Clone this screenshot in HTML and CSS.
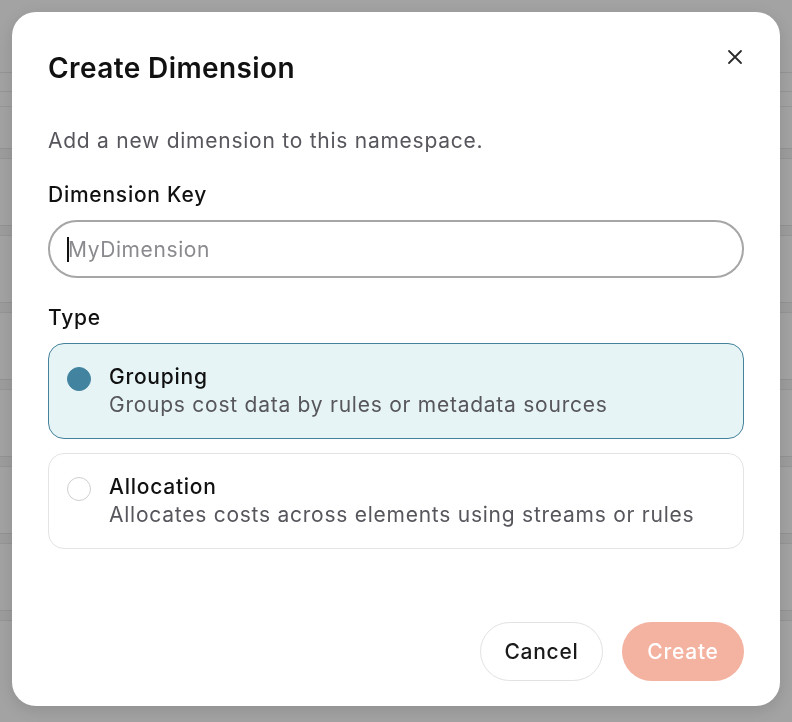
FILE: index.html
```html
<!DOCTYPE html>
<html lang="en">

<head>
    <meta charset="UTF-8">
    <meta name="viewport" content="width=device-width, initial-scale=1.0">
    <title>Create Dimension</title>
    <link rel="stylesheet" href="styles.css">
</head>

<body>

    <!-- page behind the dialog -->
    <div class="page">
        <div class="table-head"></div>
        <div class="table-sub"></div>
        <div class="rows">
            <div class="row"><div class="band"></div></div>
            <div class="row"><div class="band"></div></div>
            <div class="row"><div class="band"></div></div>
            <div class="row"><div class="band"></div></div>
            <div class="row"><div class="band"></div></div>
            <div class="row"><div class="band"></div></div>
            <div class="row"><div class="band"></div></div>
        </div>
    </div>

    <div class="overlay">
        <div class="modal">
            <div class="modal-header">
                <h2>Create Dimension</h2>
                <button class="close" aria-label="Close">
                    <svg width="16" height="16" viewBox="0 0 16 16">
                        <path d="M2 2 L14 14 M14 2 L2 14" stroke="#2b2b2b" stroke-width="1.8" stroke-linecap="round" />
                    </svg>
                </button>
            </div>

            <p class="subtitle">Add a new dimension to this namespace.</p>

            <label for="key">Dimension Key</label>
            <div class="field">
                <input type="text" id="key" placeholder="MyDimension">
                <span class="caret"></span>
            </div>

            <label>Type</label>
            <div class="options">
                <div class="option selected">
                    <span class="radio"></span>
                    <div>
                        <div class="option-title">Grouping</div>
                        <div class="option-desc">Groups cost data by rules or metadata sources</div>
                    </div>
                </div>
                <div class="option">
                    <span class="radio"></span>
                    <div>
                        <div class="option-title">Allocation</div>
                        <div class="option-desc">Allocates costs across elements using streams or rules</div>
                    </div>
                </div>
            </div>

            <div class="actions">
                <button class="btn btn-cancel">Cancel</button>
                <button class="btn btn-create">Create</button>
            </div>
        </div>
    </div>

</body>

</html>
```

FILE: styles.css
```css
body {
    font-family: 'Inter', 'Open Sans', sans-serif;
    background-color: #a3a3a3;
    margin: 0;
    padding: 0;
    letter-spacing: 0.75px;
}

/* Faded table under the overlay */
.page {
    padding-top: 72px;
}

.table-head {
    height: 18px;
    border-top: 1px solid #959595;
    border-bottom: 1px solid #969696;
}

.table-sub {
    height: 14px;
    border-bottom: 1px solid #979797;
}

.rows {
    margin-top: 41px;
}

.row {
    height: 77px;
}

.band {
    height: 9px;
    background-color: #9d9d9d;
    border-top: 1px solid #939393;
    border-bottom: 1px solid #959595;
}

.overlay {
    position: fixed;
    inset: 0;
    padding: 12px;
}

.modal {
    background-color: white;
    border-radius: 24px;
    height: 694px;
    box-sizing: border-box;
    padding: 40px 36px 25px;
    display: flex;
    flex-direction: column;
    box-shadow: 0px 4px 16px rgba(0, 0, 0, 0.12);
}

.modal-header {
    display: flex;
    justify-content: space-between;
    align-items: flex-start;
}

h2 {
    margin: 0;
    font-size: 28px;
    line-height: 32px;
    font-weight: 600;
    letter-spacing: 0.4px;
    color: #111;
}

.close {
    background: none;
    border: none;
    padding: 0;
    margin-top: -3px;
    margin-right: 1px;
    width: 16px;
    height: 16px;
    cursor: pointer;
}

.subtitle {
    margin: 43px 0 26px;
    font-size: 21px;
    line-height: 28px;
    color: #56565c;
}

label {
    display: block;
    font-size: 21px;
    line-height: 28px;
    font-weight: 500;
    color: #111;
    margin-bottom: 11px;
}

.field {
    position: relative;
    margin-bottom: 26px;
}

input[type="text"] {
    width: 100%;
    height: 58px;
    box-sizing: border-box;
    border: 2px solid #a6a6a6;
    border-radius: 29px;
    padding: 0 18px;
    font-family: inherit;
    font-size: 21px;
    letter-spacing: 0.6px;
    color: #222;
    outline: none;
}

input::placeholder {
    color: #8a8a8e;
}

/* text cursor shown in the focused field */
.caret {
    position: absolute;
    left: 19px;
    top: 17px;
    width: 2px;
    height: 25px;
    background-color: #111;
}

.options {
    display: flex;
    flex-direction: column;
    gap: 14px;
}

.option {
    display: flex;
    align-items: flex-start;
    gap: 18px;
    padding: 19px 18px;
    border: 1px solid #e4e4e4;
    border-radius: 16px;
}

.option.selected {
    background-color: #e6f4f6;
    border-color: #44819b;
}

.radio {
    width: 24px;
    height: 24px;
    box-sizing: border-box;
    border-radius: 50%;
    border: 1px solid #cfcfcf;
    margin-top: 4px;
    flex-shrink: 0;
}

.selected .radio {
    background-color: #42839f;
    border-color: #42839f;
}

.option-title {
    font-size: 21px;
    line-height: 28px;
    font-weight: 500;
    color: #111;
}

.option-desc {
    font-size: 21px;
    line-height: 28px;
    color: #56565c;
}

.actions {
    margin-top: auto;
    display: flex;
    justify-content: flex-end;
    gap: 19px;
}

.btn {
    height: 59px;
    border-radius: 30px;
    font-family: inherit;
    font-size: 21px;
    font-weight: 500;
    letter-spacing: 0.75px;
    cursor: pointer;
}

.btn-cancel {
    width: 123px;
    background-color: white;
    border: 1px solid #e2e2e2;
    color: #1a1a1a;
}

.btn-create {
    width: 122px;
    background-color: #f4b2a0;
    border: none;
    color: white;
}
```
